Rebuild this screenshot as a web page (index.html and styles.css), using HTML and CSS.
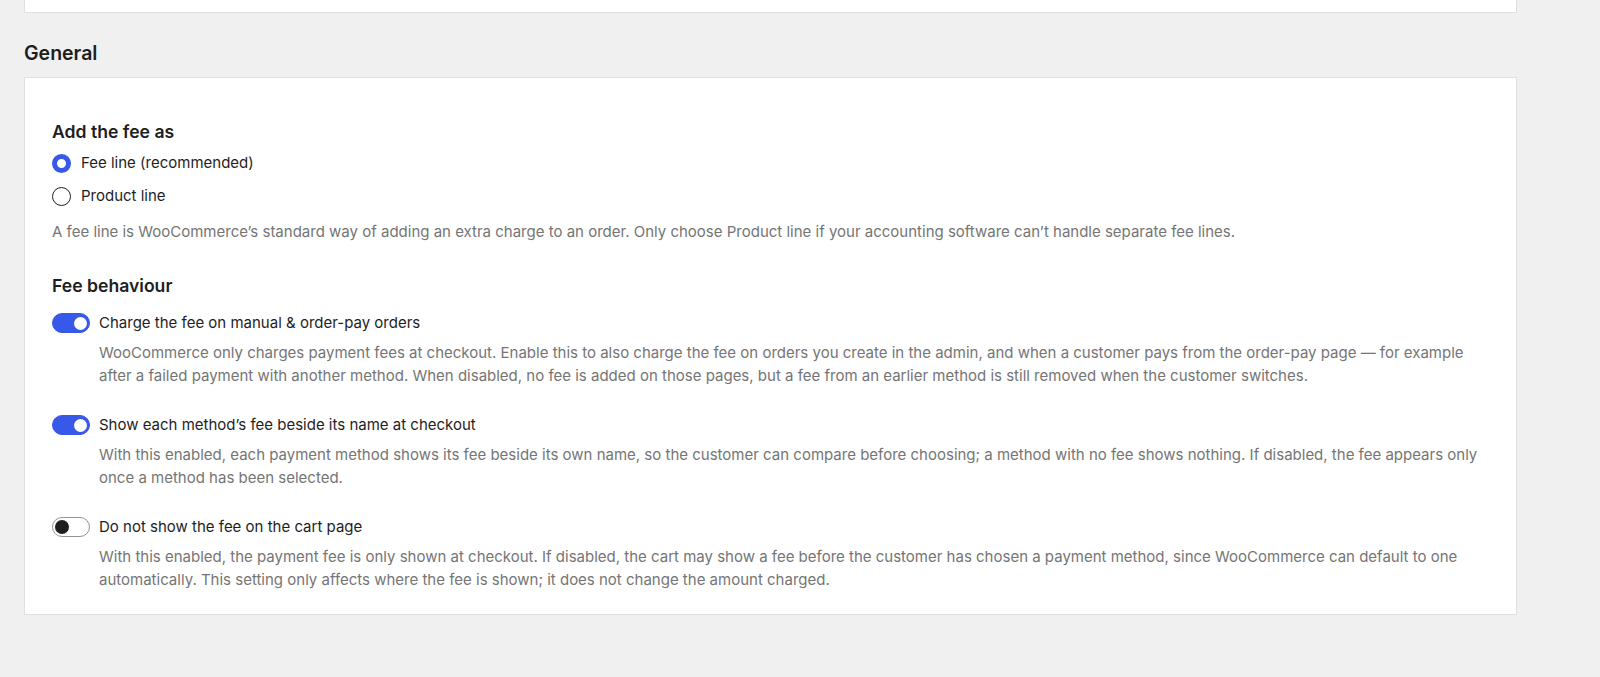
FILE: index.html
```html
<!DOCTYPE html>
<html lang="en">
<head>
  <meta charset="UTF-8">
  <meta name="viewport" content="width=device-width, initial-scale=1.0">
  <title>Payment fees – General</title>
  <link rel="stylesheet" href="styles.css">
</head>
<body>
  <div class="wrap">
    <div class="panel panel-prev"></div>

    <h2 class="section-title">General</h2>

    <div class="panel">
      <div class="group">
        <h3 class="group-title">Add the fee as</h3>
        <label class="radio-row">
          <span class="radio checked"></span>
          <span>Fee line (recommended)</span>
        </label>
        <label class="radio-row">
          <span class="radio"></span>
          <span>Product line</span>
        </label>
        <p class="help">A fee line is WooCommerce’s standard way of adding an extra charge to an order. Only choose Product line if your accounting software can’t handle separate fee lines.</p>
      </div>

      <div class="group">
        <h3 class="group-title">Fee behaviour</h3>

        <div class="toggle-item">
          <label class="toggle-row">
            <span class="toggle on"><span class="knob"></span></span>
            <span>Charge the fee on manual &amp; order-pay orders</span>
          </label>
          <p class="help indent">WooCommerce only charges payment fees at checkout. Enable this to also charge the fee on orders you create in the admin, and when a customer pays from the order-pay page — for example after a failed payment with another method. When disabled, no fee is added on those pages, but a fee from an earlier method is still removed when the customer switches.</p>
        </div>

        <div class="toggle-item">
          <label class="toggle-row">
            <span class="toggle on"><span class="knob"></span></span>
            <span>Show each method’s fee beside its name at checkout</span>
          </label>
          <p class="help indent">With this enabled, each payment method shows its fee beside its own name, so the customer can compare before choosing; a method with no fee shows nothing. If disabled, the fee appears only once a method has been selected.</p>
        </div>

        <div class="toggle-item">
          <label class="toggle-row">
            <span class="toggle"><span class="knob"></span></span>
            <span>Do not show the fee on the cart page</span>
          </label>
          <p class="help indent">With this enabled, the payment fee is only shown at checkout. If disabled, the cart may show a fee before the customer has chosen a payment method, since WooCommerce can default to one automatically. This setting only affects where the fee is shown; it does not change the amount charged.</p>
        </div>
      </div>
    </div>
  </div>
</body>
</html>
```

FILE: styles.css
```css
body {
  margin: 0;
  padding: 0;
  background-color: #f0f0f1;
  font-family: Inter, "Noto Sans", sans-serif;
  color: #1e1e1e;
}
.wrap {
  width: 1493px;
  margin-left: 24px;
}
.panel {
  background-color: #fff;
  border: 1px solid #e0e0e0;
  padding: 42px 28px 23px 27px;
}
.panel-prev {
  border-top: none;
  height: 12px;
  padding: 0;
}
.section-title {
  font-size: 19.5px;
  font-weight: 600;
  line-height: 28px;
  margin: 26px 0 10px;
}
.group-title {
  font-size: 17.6px;
  font-weight: 600;
  line-height: 24px;
  margin: 0 0 7px;
}
.group + .group {
  margin-top: 31px;
}
.radio-row,
.toggle-row {
  display: flex;
  align-items: center;
  font-size: 15px;
  line-height: 24px;
}
.radio-row {
  gap: 10px;
}
.radio-row + .radio-row {
  margin-top: 9px;
}
.radio {
  box-sizing: border-box;
  width: 19px;
  height: 19px;
  border-radius: 50%;
  border: 1.5px solid #1e1e1e;
  background-color: #fff;
}
.radio.checked {
  border: 5.5px solid #3858e9;
}
.help {
  font-size: 15px;
  line-height: 23px;
  color: #757575;
  margin: 12px 0 0;
}
.help.indent {
  margin: 6px 0 0 47px;
}
.toggle-row {
  gap: 9px;
}
.toggle-item {
  margin-top: 13px;
}
.toggle-item + .toggle-item {
  margin-top: 26px;
}
.toggle {
  box-sizing: border-box;
  width: 38px;
  height: 20px;
  border-radius: 10px;
  border: 1px solid #949494;
  background-color: #fff;
  display: flex;
  align-items: center;
  padding: 0 2px;
}
.toggle .knob {
  width: 14px;
  height: 14px;
  border-radius: 50%;
  background-color: #1e1e1e;
}
.toggle.on {
  background-color: #3858e9;
  border-color: #3858e9;
  justify-content: flex-end;
}
.toggle.on .knob {
  background-color: #fff;
  width: 13px;
  height: 13px;
}
```
